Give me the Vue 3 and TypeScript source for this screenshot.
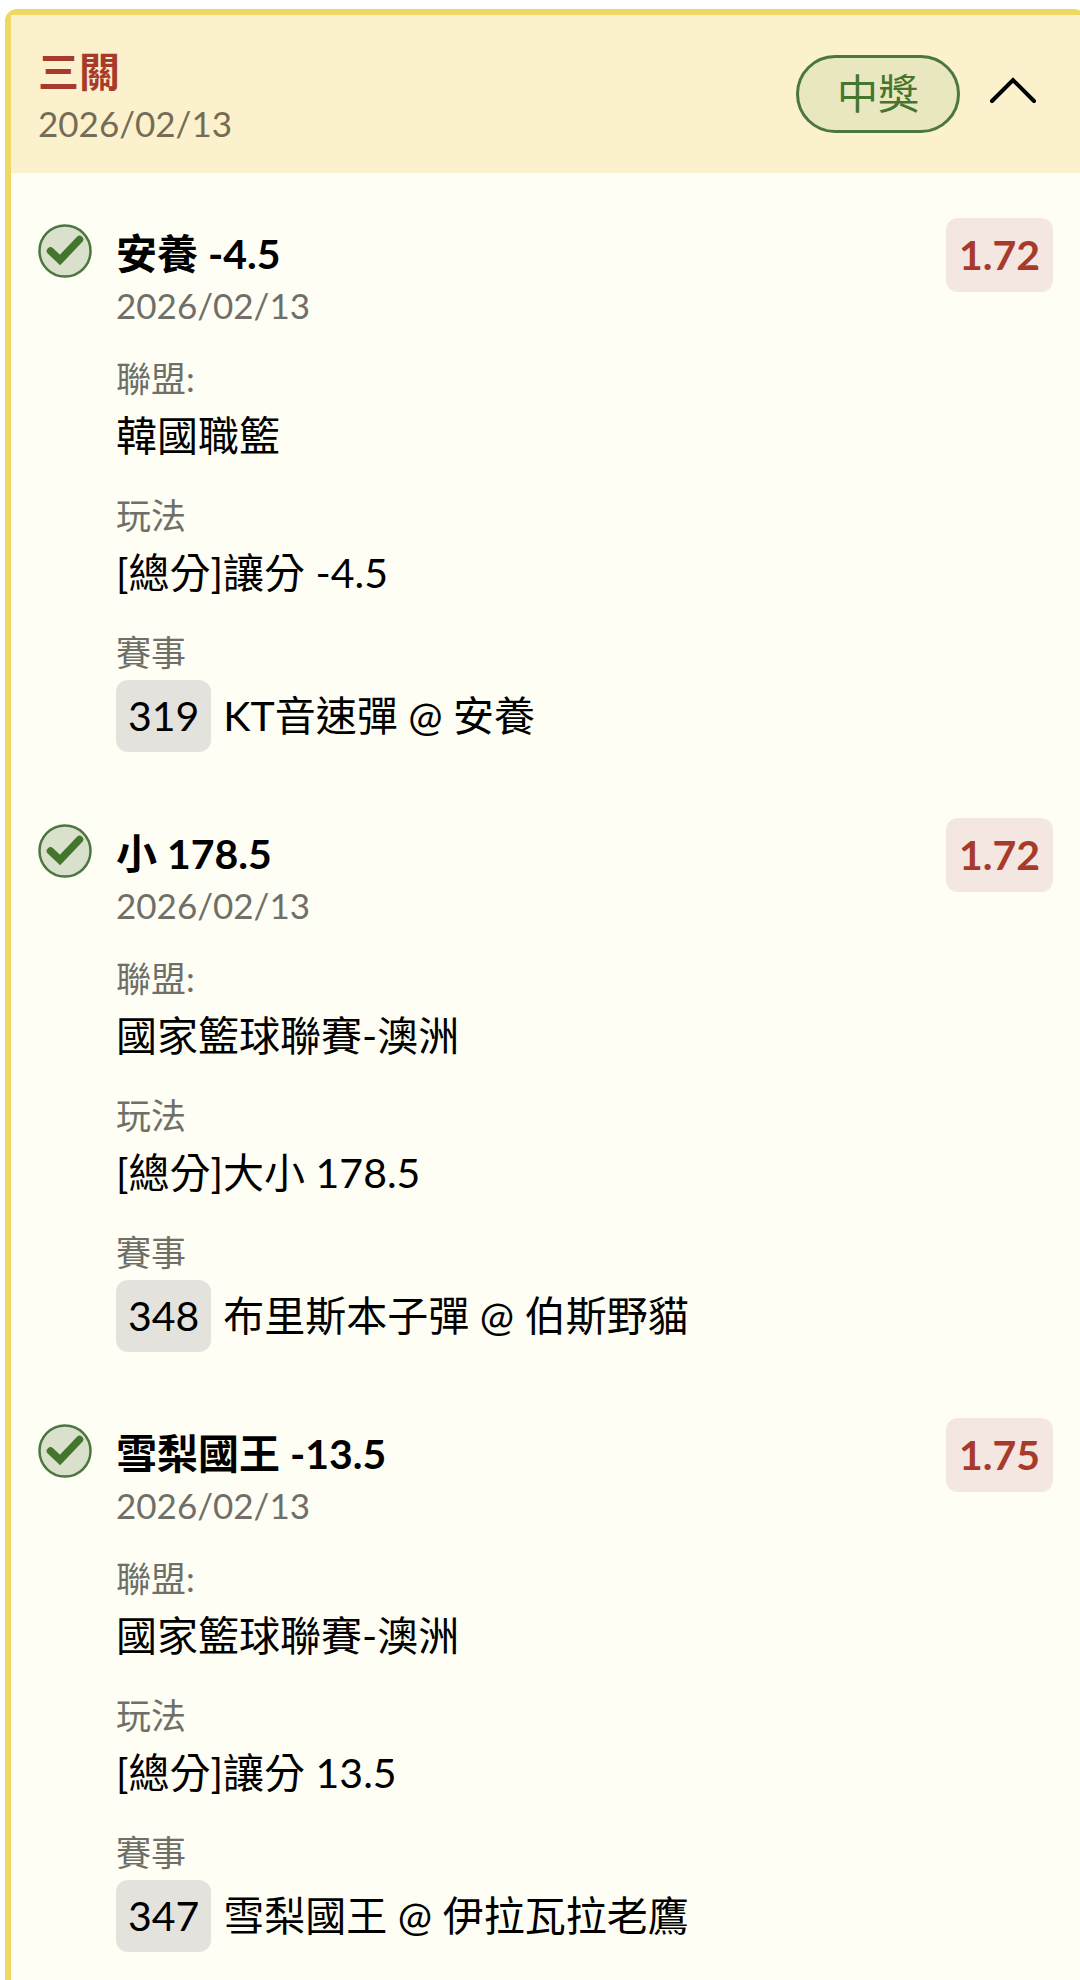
<script setup lang="ts">
import { ref } from 'vue'

interface Leg {
  pick: string
  date: string
  odds: string
  league: string
  play: string
  matchNo: string
  match: string
}

const open = ref(true)

const legs: Leg[] = [
  { pick: '安養 -4.5', date: '2026/02/13', odds: '1.72', league: '韓國職籃', play: '[總分]讓分 -4.5', matchNo: '319', match: 'KT音速彈 @ 安養' },
  { pick: '小 178.5', date: '2026/02/13', odds: '1.72', league: '國家籃球聯賽-澳洲', play: '[總分]大小 178.5', matchNo: '348', match: '布里斯本子彈 @ 伯斯野貓' },
  { pick: '雪梨國王 -13.5', date: '2026/02/13', odds: '1.75', league: '國家籃球聯賽-澳洲', play: '[總分]讓分 13.5', matchNo: '347', match: '雪梨國王 @ 伊拉瓦拉老鷹' },
]
</script>

<template>
  <main class="page" lang="zh-Hant">
    <article class="card">
      <header class="head">
        <div class="head-text">
          <h1 class="head-title">三關</h1>
          <time class="date head-date">2026/02/13</time>
        </div>
        <span class="status">中獎</span>
        <button class="toggle" type="button" aria-label="收合" :aria-expanded="open" @click="open = !open">
          <svg viewBox="0 0 48 48" width="48" height="48" aria-hidden="true">
            <path d="M3 31 24 10 45 31" fill="none" stroke="#000" stroke-width="4" stroke-linecap="round" />
          </svg>
        </button>
      </header>

      <ul v-if="open" class="legs">
        <li v-for="leg in legs" :key="leg.matchNo" class="leg">
          <svg class="check" viewBox="0 0 54 54" width="54" height="54" aria-hidden="true">
            <circle cx="27" cy="27" r="25.5" fill="#d9e1cd" stroke="#4b7640" stroke-width="2.5" />
            <path d="M12.5 27 22 36 41.5 15.5" fill="none" stroke="#44752d" stroke-width="7.5" stroke-linecap="round" />
          </svg>
          <div class="info">
            <h2 class="pick">{{ leg.pick }}</h2>
            <time class="date">{{ leg.date }}</time>
            <dl class="details">
              <div class="field">
                <dt>聯盟:</dt>
                <dd>{{ leg.league }}</dd>
              </div>
              <div class="field">
                <dt>玩法</dt>
                <dd>{{ leg.play }}</dd>
              </div>
              <div class="field">
                <dt>賽事</dt>
                <dd class="match">
                  <span class="match-no">{{ leg.matchNo }}</span>
                  <span>{{ leg.match }}</span>
                </dd>
              </div>
            </dl>
          </div>
          <span class="odds">{{ leg.odds }}</span>
        </li>
      </ul>
    </article>
  </main>
</template>

<style>
body {
  margin: 0;
  background: #fefefe;
}
</style>

<style scoped>
.page {
  overflow: hidden;
  padding-top: 9px;
  font-family: Lato, "Noto Sans CJK TC", sans-serif;
  font-size: 41px;
  line-height: 66px;
  color: #000;
}

.card {
  margin: 0 -6px 0 5px;
  border: 6px solid #efd864;
  border-bottom: 0;
  border-radius: 12px 12px 0 0;
  background: #fefef4;
}

.head {
  display: flex;
  align-items: center;
  padding: 26px 43px 26px 27px;
  background: #fcf1cd;
}

.head-text {
  flex: 1;
  padding-top: 4px;
}

.head-title,
.pick {
  margin: 0;
  font-size: 41px;
  line-height: 54px;
  font-weight: 700;
}

.head-title {
  color: #a83a2c;
}

.date {
  display: block;
  font-size: 35px;
  line-height: 48px;
  color: #6f6f68;
}

.head-date {
  color: #756c55;
}

.status {
  box-sizing: border-box;
  height: 78px;
  padding: 0 38px;
  border: 3px solid #4b7640;
  border-radius: 39px;
  background: #e8e7c0;
  color: #46752f;
  line-height: 72px;
}

.toggle {
  margin-left: 29px;
  padding: 0;
  border: 0;
  background: none;
  cursor: pointer;
}

.toggle svg,
.check {
  display: block;
}

.legs {
  display: flex;
  flex-direction: column;
  gap: 66px;
  margin: 0;
  padding: 45px 27px 28px;
  list-style: none;
}

.leg {
  display: flex;
  align-items: flex-start;
}

.check {
  flex: none;
  margin: 6px 24px 0 0;
}

.info {
  flex: 1;
  padding-top: 9px;
}

.details {
  display: flex;
  flex-direction: column;
  gap: 21px;
  margin: 24px 0 0;
}

.field dt {
  font-size: 35px;
  line-height: 50px;
  color: #6f6f68;
}

.field dd {
  margin: 0;
}

.field .match {
  display: flex;
  align-items: center;
  gap: 12px;
  margin-top: 3px;
  line-height: 72px;
}

.match-no {
  padding: 0 12px;
  border-radius: 12px;
  background: #e3e2dc;
}

.odds {
  padding: 0 13px;
  border-radius: 12px;
  background: #f4e6e0;
  color: #a83a2c;
  font-weight: 700;
  line-height: 74px;
}
</style>
